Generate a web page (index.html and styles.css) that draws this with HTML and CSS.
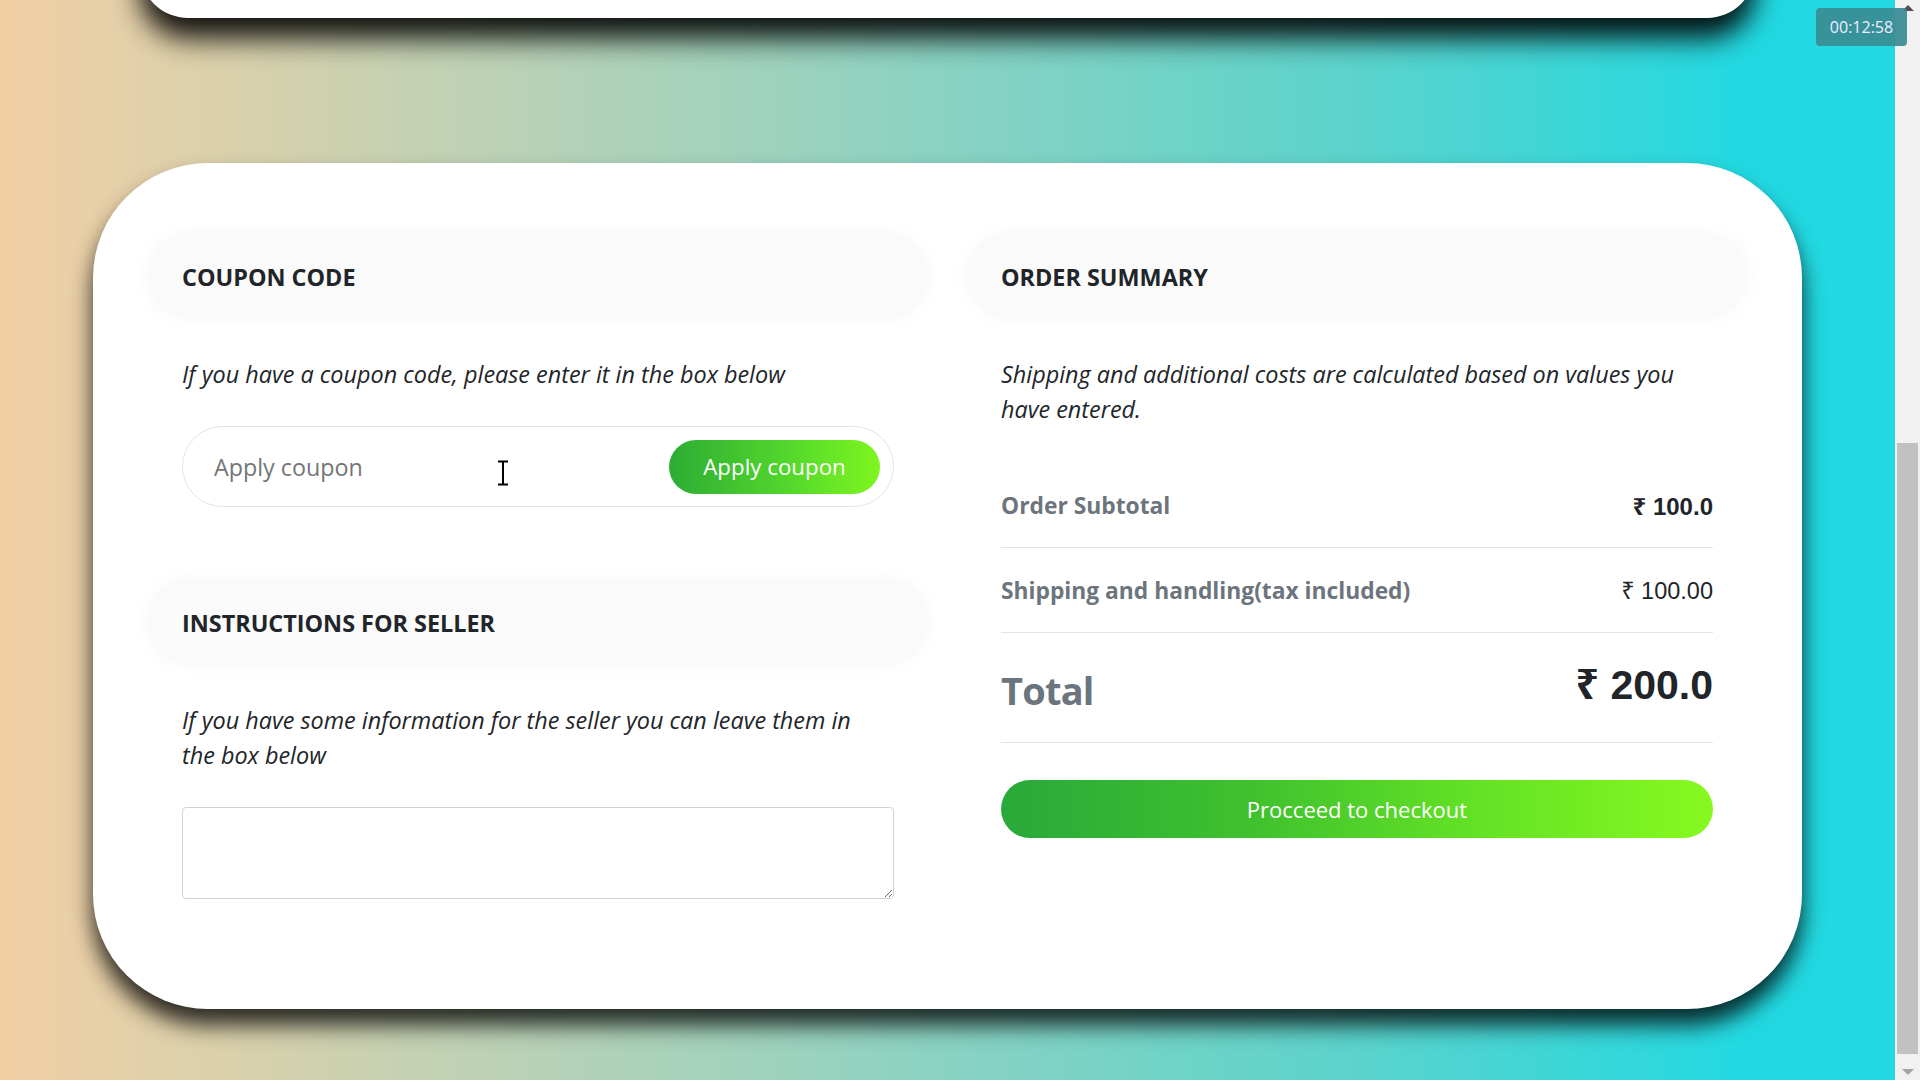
FILE: index.html
```html
<!DOCTYPE html>
<html lang="en">
<head>
<meta charset="utf-8">
<title>Cart</title>
<link rel="stylesheet" href="styles.css">
</head>
<body>
<div class="viewport">
  <div class="top-card"></div>
  <div class="card">
    <div class="grid">
      <div class="col">
        <div class="pill"><h2>COUPON CODE</h2></div>
        <p class="note">If you have a coupon code, please enter it in the box below</p>
        <div class="coupon">
          <span class="placeholder">Apply coupon</span>
          <svg class="ibeam" width="14" height="26" viewBox="0 0 14 26"><path d="M2 1.5h10M7 1.5v23M2 24.5h10" stroke="#000" stroke-width="2" fill="none"/></svg>
          <button class="btn-apply">Apply coupon</button>
        </div>
        <div class="pill pill-gap"><h2>INSTRUCTIONS FOR SELLER</h2></div>
        <p class="note">If you have some information for the seller you can leave them in the box below</p>
        <div class="textarea-wrap"><textarea class="seller-box"></textarea></div>
      </div>
      <div class="col">
        <div class="pill"><h2>ORDER SUMMARY</h2></div>
        <p class="note">Shipping and additional costs are calculated based on values you have entered.</p>
        <div class="rows">
          <div class="row">
            <span class="label">Order Subtotal</span>
            <span class="amount strong">₹ 100.0</span>
          </div>
          <div class="row">
            <span class="label">Shipping and handling(tax included)</span>
            <span class="amount">₹ 100.00</span>
          </div>
          <div class="row total-row">
            <span class="total-label">Total</span>
            <span class="total-amount">₹ 200.0</span>
          </div>
          <button class="btn-checkout">Procceed to checkout</button>
        </div>
      </div>
    </div>
  </div>
</div>
<div class="scrollbar">
  <div class="arrow up"></div>
  <div class="track"><div class="thumb"></div></div>
  <div class="arrow down"></div>
</div>
<div class="timer">00:12:58</div>
</body>
</html>
```
FILE: styles.css
```css
* { box-sizing: border-box; }
html, body { margin: 0; height: 1080px; overflow: hidden; }
body {
  position: relative;
  display: flex;
  font-family: "Open Sans", "Noto Sans", sans-serif;
  color: #212529;
}
.viewport {
  flex: 1;
  height: 1080px;
  overflow: hidden;
  background: linear-gradient(to right, #f0cfa3 0%, #e6d0a8 6%, #9fd2bd 40%, #5ad3cc 72%, #22d9e1 92%, #22d9e1 100%);
}
.top-card {
  width: 85.2%;
  height: 78px;
  margin: -60px auto 0;
  background: #fff;
  border-radius: 0 0 48px 48px;
  box-shadow: 0 20px 28px rgba(0,0,0,0.92);
}
.timer {
  position: absolute;
  right: 13px;
  top: 8px;
  width: 91px;
  height: 38px;
  border-radius: 4px;
  background: rgba(58, 140, 148, 0.93);
  color: #eef;
  font-family: "Open Sans", sans-serif;
  font-size: 16px;
  display: flex;
  align-items: center;
  justify-content: center;
  z-index: 3;
}
.card {
  width: 1709px;
  margin: 145px auto 0;
  background: #fff;
  border-radius: 115px;
  padding: 70px 55px 110px;
  box-shadow: 0 16px 22px rgba(0,0,0,0.8);
}
.grid {
  display: grid;
  grid-template-columns: 1fr 1fr;
  column-gap: 39px;
}
.col { display: flex; flex-direction: column; }
.pill {
  height: 85px;
  border-radius: 42px;
  background: #fafafa;
  box-shadow: 0 0 14px 4px rgba(0,0,0,0.025);
  display: flex;
  align-items: center;
  padding: 2px 34px 0;
}
.pill h2 {
  margin: 0;
  font-size: 23.4px;
  font-weight: 700;
  color: #212529;
}
.pill-gap { margin-top: 72px; }
.note {
  margin: 39px 0 34px;
  padding: 0 50px 0 34px;
  font-style: italic;
  font-size: 23.4px;
  line-height: 35px;
  color: #212529;
}
.coupon {
  position: relative;
  margin: 0 34px;
  height: 81px;
  border: 1px solid #e4e4e6;
  border-radius: 41px;
  display: flex;
  align-items: center;
  justify-content: space-between;
  padding: 0 13px 0 31px;
}
.placeholder {
  font-size: 23.3px;
  color: #757575;
}
.ibeam {
  position: absolute;
  left: 313px;
  top: 33px;
}
.btn-apply {
  width: 211px;
  height: 54px;
  border: 0;
  border-radius: 27px;
  background: linear-gradient(to right, #2dac35, #52d62c 55%, #7ff620);
  color: #fff;
  font-family: "Open Sans", sans-serif;
  font-size: 22.3px;
  padding: 0;
}
.textarea-wrap { padding: 0 34px; }
.seller-box {
  display: block;
  width: 100%;
  height: 92px;
  border: 1px solid #cfd3d7;
  border-radius: 4px;
  resize: vertical;
  font-family: "Open Sans", sans-serif;
}
.rows { padding: 0 34px; margin-top: 2px; display: flex; flex-direction: column; }
.row {
  display: flex;
  justify-content: space-between;
  align-items: center;
  height: 85px;
  border-bottom: 1px solid #e3e4e6;
}
.label {
  font-size: 22.8px;
  font-weight: 700;
  color: #6c757d;
}
.amount {
  font-family: "Liberation Sans", "Noto Sans", sans-serif;
  font-size: 23.5px;
  color: #212529;
}
.amount.strong { font-weight: 700; font-size: 24px; }
.total-row { height: 110px; align-items: center; }
.total-label {
  font-size: 38px;
  font-weight: 700;
  color: #6c757d;
  letter-spacing: -0.8px;
  padding-top: 4px;
}
.total-amount {
  font-family: "Liberation Sans", "Noto Sans", sans-serif;
  font-size: 41px;
  font-weight: 700;
  color: #212529;
  padding-bottom: 10px;
}
.btn-checkout {
  margin-top: 37px;
  height: 58px;
  border: 0;
  border-radius: 29px;
  background: linear-gradient(to right, #28a93a, #3fc12e 35%, #62e026 65%, #86f91f);
  color: #fff;
  font-family: "Open Sans", sans-serif;
  font-size: 22px;
}
.scrollbar {
  width: 25px;
  height: 1080px;
  background: #f1f1f1;
  display: flex;
  flex-direction: column;
  align-items: center;
}
.arrow {
  width: 0; height: 0;
  border-left: 6px solid transparent;
  border-right: 6px solid transparent;
  margin: 5px 0;
}
.arrow.up { border-bottom: 6px solid #505050; }
.arrow.down { border-top: 6px solid #a3a3a3; }
.track { flex: 1; width: 100%; display: flex; flex-direction: column; padding: 0 2px; }
.thumb {
  margin-top: 427px;
  height: 611px;
  background: #c1c1c1;
}
```
